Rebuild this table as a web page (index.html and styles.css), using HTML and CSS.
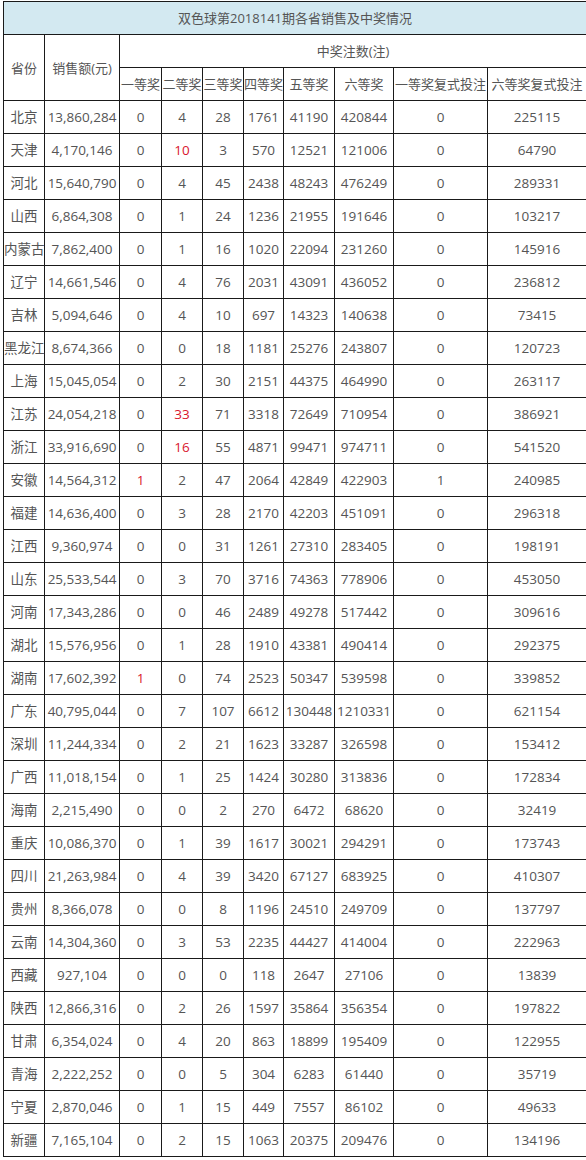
FILE: index.html
```html
<!DOCTYPE html>
<html lang="zh-CN">
<head>
<meta charset="utf-8">
<title>双色球第2018141期各省销售及中奖情况</title>
<link rel="stylesheet" href="styles.css">
</head>
<body>
<table class="sheet">
<colgroup>
<col class="c-prov"><col class="c-sales"><col class="c-p1"><col class="c-p2"><col class="c-p3"><col class="c-p4"><col class="c-p5"><col class="c-p6"><col class="c-f1"><col class="c-f6">
</colgroup>
<thead>
<tr class="title-row"><th colspan="10" class="title">双色球第2018141期各省销售及中奖情况</th></tr>
<tr class="head-row"><th rowspan="2">省份</th><th rowspan="2">销售额(元)</th><th colspan="8">中奖注数(注)</th></tr>
<tr class="head-row"><th>一等奖</th><th>二等奖</th><th>三等奖</th><th>四等奖</th><th>五等奖</th><th>六等奖</th><th>一等奖复式投注</th><th>六等奖复式投注</th></tr>
</thead>
<tbody>
<tr><td>北京</td><td>13,860,284</td><td>0</td><td>4</td><td>28</td><td>1761</td><td>41190</td><td>420844</td><td>0</td><td>225115</td></tr>
<tr><td>天津</td><td>4,170,146</td><td>0</td><td class="hot">10</td><td>3</td><td>570</td><td>12521</td><td>121006</td><td>0</td><td>64790</td></tr>
<tr><td>河北</td><td>15,640,790</td><td>0</td><td>4</td><td>45</td><td>2438</td><td>48243</td><td>476249</td><td>0</td><td>289331</td></tr>
<tr><td>山西</td><td>6,864,308</td><td>0</td><td>1</td><td>24</td><td>1236</td><td>21955</td><td>191646</td><td>0</td><td>103217</td></tr>
<tr><td>内蒙古</td><td>7,862,400</td><td>0</td><td>1</td><td>16</td><td>1020</td><td>22094</td><td>231260</td><td>0</td><td>145916</td></tr>
<tr><td>辽宁</td><td>14,661,546</td><td>0</td><td>4</td><td>76</td><td>2031</td><td>43091</td><td>436052</td><td>0</td><td>236812</td></tr>
<tr><td>吉林</td><td>5,094,646</td><td>0</td><td>4</td><td>10</td><td>697</td><td>14323</td><td>140638</td><td>0</td><td>73415</td></tr>
<tr><td>黑龙江</td><td>8,674,366</td><td>0</td><td>0</td><td>18</td><td>1181</td><td>25276</td><td>243807</td><td>0</td><td>120723</td></tr>
<tr><td>上海</td><td>15,045,054</td><td>0</td><td>2</td><td>30</td><td>2151</td><td>44375</td><td>464990</td><td>0</td><td>263117</td></tr>
<tr><td>江苏</td><td>24,054,218</td><td>0</td><td class="hot">33</td><td>71</td><td>3318</td><td>72649</td><td>710954</td><td>0</td><td>386921</td></tr>
<tr><td>浙江</td><td>33,916,690</td><td>0</td><td class="hot">16</td><td>55</td><td>4871</td><td>99471</td><td>974711</td><td>0</td><td>541520</td></tr>
<tr><td>安徽</td><td>14,564,312</td><td class="hot">1</td><td>2</td><td>47</td><td>2064</td><td>42849</td><td>422903</td><td>1</td><td>240985</td></tr>
<tr><td>福建</td><td>14,636,400</td><td>0</td><td>3</td><td>28</td><td>2170</td><td>42203</td><td>451091</td><td>0</td><td>296318</td></tr>
<tr><td>江西</td><td>9,360,974</td><td>0</td><td>0</td><td>31</td><td>1261</td><td>27310</td><td>283405</td><td>0</td><td>198191</td></tr>
<tr><td>山东</td><td>25,533,544</td><td>0</td><td>3</td><td>70</td><td>3716</td><td>74363</td><td>778906</td><td>0</td><td>453050</td></tr>
<tr><td>河南</td><td>17,343,286</td><td>0</td><td>0</td><td>46</td><td>2489</td><td>49278</td><td>517442</td><td>0</td><td>309616</td></tr>
<tr><td>湖北</td><td>15,576,956</td><td>0</td><td>1</td><td>28</td><td>1910</td><td>43381</td><td>490414</td><td>0</td><td>292375</td></tr>
<tr><td>湖南</td><td>17,602,392</td><td class="hot">1</td><td>0</td><td>74</td><td>2523</td><td>50347</td><td>539598</td><td>0</td><td>339852</td></tr>
<tr><td>广东</td><td>40,795,044</td><td>0</td><td>7</td><td>107</td><td>6612</td><td>130448</td><td>1210331</td><td>0</td><td>621154</td></tr>
<tr><td>深圳</td><td>11,244,334</td><td>0</td><td>2</td><td>21</td><td>1623</td><td>33287</td><td>326598</td><td>0</td><td>153412</td></tr>
<tr><td>广西</td><td>11,018,154</td><td>0</td><td>1</td><td>25</td><td>1424</td><td>30280</td><td>313836</td><td>0</td><td>172834</td></tr>
<tr><td>海南</td><td>2,215,490</td><td>0</td><td>0</td><td>2</td><td>270</td><td>6472</td><td>68620</td><td>0</td><td>32419</td></tr>
<tr><td>重庆</td><td>10,086,370</td><td>0</td><td>1</td><td>39</td><td>1617</td><td>30021</td><td>294291</td><td>0</td><td>173743</td></tr>
<tr><td>四川</td><td>21,263,984</td><td>0</td><td>4</td><td>39</td><td>3420</td><td>67127</td><td>683925</td><td>0</td><td>410307</td></tr>
<tr><td>贵州</td><td>8,366,078</td><td>0</td><td>0</td><td>8</td><td>1196</td><td>24510</td><td>249709</td><td>0</td><td>137797</td></tr>
<tr><td>云南</td><td>14,304,360</td><td>0</td><td>3</td><td>53</td><td>2235</td><td>44427</td><td>414004</td><td>0</td><td>222963</td></tr>
<tr><td>西藏</td><td>927,104</td><td>0</td><td>0</td><td>0</td><td>118</td><td>2647</td><td>27106</td><td>0</td><td>13839</td></tr>
<tr><td>陕西</td><td>12,866,316</td><td>0</td><td>2</td><td>26</td><td>1597</td><td>35864</td><td>356354</td><td>0</td><td>197822</td></tr>
<tr><td>甘肃</td><td>6,354,024</td><td>0</td><td>4</td><td>20</td><td>863</td><td>18899</td><td>195409</td><td>0</td><td>122955</td></tr>
<tr><td>青海</td><td>2,222,252</td><td>0</td><td>0</td><td>5</td><td>304</td><td>6283</td><td>61440</td><td>0</td><td>35719</td></tr>
<tr><td>宁夏</td><td>2,870,046</td><td>0</td><td>1</td><td>15</td><td>449</td><td>7557</td><td>86102</td><td>0</td><td>49633</td></tr>
<tr><td>新疆</td><td>7,165,104</td><td>0</td><td>2</td><td>15</td><td>1063</td><td>20375</td><td>209476</td><td>0</td><td>134196</td></tr>
</tbody>
</table>
</body>
</html>
```
FILE: styles.css
```css
html, body {
  margin: 0;
  padding: 0;
  background: #ffffff;
}
body {
  padding: 1px 0 0 3px;
  font-family: "Open Sans", "Noto Sans CJK SC", sans-serif;
  color: #555555;
}
.sheet {
  border-collapse: collapse;
  table-layout: fixed;
  width: 583px;
}
.c-prov { width: 41px; }
.c-sales { width: 75px; }
.c-p1 { width: 42px; }
.c-p2 { width: 41px; }
.c-p3 { width: 41px; }
.c-p4 { width: 40px; }
.c-p5 { width: 51px; }
.c-p6 { width: 59px; }
.c-f1 { width: 94px; }
.c-f6 { width: 99px; }
.sheet th,
.sheet td {
  border: 1px solid #1a1a1a;
  padding: 0;
  text-align: center;
  vertical-align: middle;
  white-space: nowrap;
  overflow: visible;
  font-weight: normal;
  line-height: 18px;
}
.sheet tr {
  height: 33px;
}
.sheet td {
  font-size: 13.5px;
}
.sheet th {
  font-size: 13px;
}
.title {
  background: #d3e9f1;
}
.sheet .hot {
  color: #d9162e;
}
```
